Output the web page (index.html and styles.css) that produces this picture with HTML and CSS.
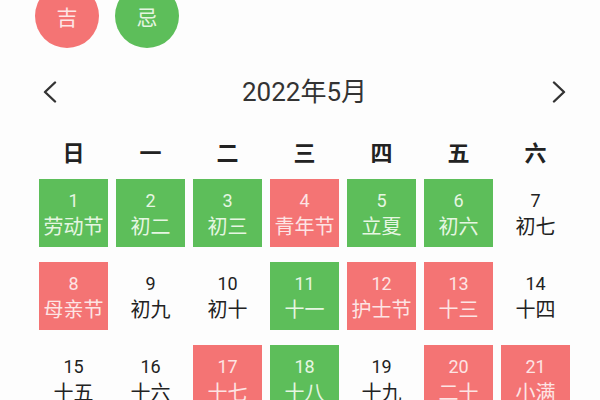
FILE: index.html
```html
<!DOCTYPE html>
<html lang="zh">
<head>
<meta charset="utf-8">
<link rel="stylesheet" href="styles.css">
</head>
<body>
<div class="page">
  <div class="badges">
    <div class="badge red">吉</div>
    <div class="badge green">忌</div>
  </div>
  <div class="nav">
    <svg class="arrow" width="16" height="22" viewBox="0 0 16 22"><polyline points="13,1.5 3,11 13,20.5" fill="none" stroke="#333" stroke-width="2.4" stroke-linecap="round" stroke-linejoin="round"/></svg>
    <div class="title">2022年5月</div>
    <svg class="arrow" width="16" height="22" viewBox="0 0 16 22"><polyline points="3,1.5 13,11 3,20.5" fill="none" stroke="#333" stroke-width="2.4" stroke-linecap="round" stroke-linejoin="round"/></svg>
  </div>
  <div class="weekdays">
    <div>日</div><div>一</div><div>二</div><div>三</div><div>四</div><div>五</div><div>六</div>
  </div>
  <div class="grid">
    <div class="cell green"><span class="num">1</span><span class="lun">劳动节</span></div>
    <div class="cell green"><span class="num">2</span><span class="lun">初二</span></div>
    <div class="cell green"><span class="num">3</span><span class="lun">初三</span></div>
    <div class="cell red"><span class="num">4</span><span class="lun">青年节</span></div>
    <div class="cell green"><span class="num">5</span><span class="lun">立夏</span></div>
    <div class="cell green"><span class="num">6</span><span class="lun">初六</span></div>
    <div class="cell"><span class="num">7</span><span class="lun">初七</span></div>

    <div class="cell red"><span class="num">8</span><span class="lun">母亲节</span></div>
    <div class="cell"><span class="num">9</span><span class="lun">初九</span></div>
    <div class="cell"><span class="num">10</span><span class="lun">初十</span></div>
    <div class="cell green"><span class="num">11</span><span class="lun">十一</span></div>
    <div class="cell red"><span class="num">12</span><span class="lun">护士节</span></div>
    <div class="cell red"><span class="num">13</span><span class="lun">十三</span></div>
    <div class="cell"><span class="num">14</span><span class="lun">十四</span></div>

    <div class="cell"><span class="num">15</span><span class="lun">十五</span></div>
    <div class="cell"><span class="num">16</span><span class="lun">十六</span></div>
    <div class="cell red"><span class="num">17</span><span class="lun">十七</span></div>
    <div class="cell green"><span class="num">18</span><span class="lun">十八</span></div>
    <div class="cell"><span class="num">19</span><span class="lun">十九</span></div>
    <div class="cell red"><span class="num">20</span><span class="lun">二十</span></div>
    <div class="cell red"><span class="num">21</span><span class="lun">小满</span></div>
  </div>
</div>
</body>
</html>
```

FILE: styles.css
```css
html, body {
  margin: 0;
  padding: 0;
  background: #fdfdfd;
  overflow: hidden;
}
body {
  width: 600px;
  height: 400px;
  font-family: Roboto, "Noto Sans CJK SC", sans-serif;
  color: #222;
}
.page {
  display: flex;
  flex-direction: column;
}
.badges {
  display: flex;
  gap: 16px;
  margin-top: -16px;
  padding-left: 35px;
}
.badge {
  width: 64px;
  height: 64px;
  border-radius: 50%;
  display: flex;
  align-items: center;
  justify-content: center;
  padding-top: 0;
  box-sizing: border-box;
  font-family: "Noto Sans CJK SC", sans-serif;
  font-size: 21px;
}
.badge.red { background: #f47474; color: #fde6e6; }
.badge.green { background: #5dbe5a; color: #e4f5e0; }

.nav {
  display: flex;
  align-items: center;
  justify-content: space-between;
  height: 40px;
  margin-top: 24px;
  padding: 0 33px 0 42px;
}
.title {
  font-size: 26px;
  color: #333;
  line-height: 40px;
}
.weekdays {
  display: grid;
  grid-template-columns: repeat(7, 69px);
  column-gap: 8px;
  margin: 24px 0 0 39px;
  height: 30px;
  align-items: center;
}
.weekdays div {
  text-align: center;
  font-family: "Noto Sans CJK SC", sans-serif;
  font-weight: bold;
  font-size: 22px;
  line-height: 30px;
  color: #222;
}
.grid {
  display: grid;
  grid-template-columns: repeat(7, 69px);
  grid-auto-rows: 68px;
  column-gap: 8px;
  row-gap: 15px;
  margin: 13px 0 0 39px;
}
.cell {
  display: flex;
  flex-direction: column;
  align-items: center;
  padding-top: 11px;
  box-sizing: border-box;
  color: #222;
}
.cell.green { background: #5dbe5a; color: #e6f6e2; }
.cell.red { background: #f47474; color: #fde4e4; }
.num {
  font-size: 18px;
  line-height: 22px;
}
.lun {
  font-family: "Noto Sans CJK SC", sans-serif;
  font-size: 20px;
  line-height: 28px;
}
```
